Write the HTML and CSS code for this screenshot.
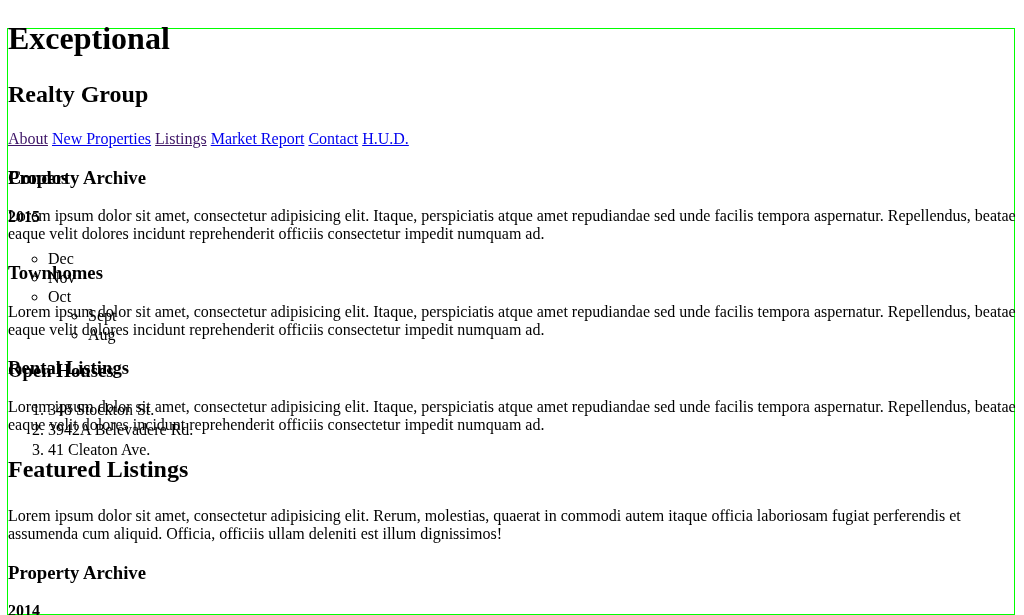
FILE: index.html
```html
<!DOCTYPE html>
<html lang="en">
<head>
<meta charset="utf-8">
<title>Exceptional Realty Group</title>
<link rel="stylesheet" href="styles.css">
</head>
<body>
<header class="site-header">
  <h1 class="brand">Exceptional</h1>
  <h2 class="tagline">Realty Group</h2>
  <nav class="nav">
    <a class="visited" href="#">About</a>
    <a href="#">New Properties</a>
    <a class="visited" href="#">Listings</a>
    <a href="#">Market Report</a>
    <a href="#">Contact</a>
    <a href="#">H.U.D.</a>
  </nav>
</header>
<div class="layout">
  <main class="content">
    <section class="block">
      <h3>Condos</h3>
      <p>Lorem ipsum dolor sit amet, consectetur adipisicing elit. Itaque, perspiciatis atque amet repudiandae sed unde facilis tempora aspernatur. Repellendus, beatae eaque velit dolores incidunt reprehenderit officiis consectetur impedit numquam ad.</p>
    </section>
    <section class="block">
      <h3>Townhomes</h3>
      <p>Lorem ipsum dolor sit amet, consectetur adipisicing elit. Itaque, perspiciatis atque amet repudiandae sed unde facilis tempora aspernatur. Repellendus, beatae eaque velit dolores incidunt reprehenderit officiis consectetur impedit numquam ad.</p>
    </section>
    <section class="block">
      <h3>Rental Listings</h3>
      <p>Lorem ipsum dolor sit amet, consectetur adipisicing elit. Itaque, perspiciatis atque amet repudiandae sed unde facilis tempora aspernatur. Repellendus, beatae eaque velit dolores incidunt reprehenderit officiis consectetur impedit numquam ad.</p>
    </section>
    <section class="block featured">
      <h2>Featured Listings</h2>
      <p>Lorem ipsum dolor sit amet, consectetur adipisicing elit. Rerum, molestias, quaerat in commodi autem itaque officia laboriosam fugiat perferendis et assumenda cum aliquid. Officia, officiis ullam deleniti est illum dignissimos!</p>
    </section>
    <aside class="archive">
      <h3>Property Archive</h3>
      <h4>2014</h4>
      <ul class="months">
        <li>Dec</li>
        <li>Nov</li>
        <li>Oct</li>
      </ul>
    </aside>
  </main>
  <aside class="sidebar">
    <h3>Property Archive</h3>
    <ul class="years">
      <li>
        <h4 class="year">2015</h4>
        <ul class="months">
          <li>Dec</li>
          <li>Nov</li>
          <li>Oct
            <ul class="months">
              <li>Sept</li>
              <li>Aug</li>
            </ul>
          </li>
        </ul>
      </li>
    </ul>
    <h3 class="open">Open Houses</h3>
    <ol class="houses">
      <li>348 Stockton St.</li>
      <li>3942A Belevadere Rd.</li>
      <li>41 Cleaton Ave.</li>
    </ol>
  </aside>
</div>
</body>
</html>
```
FILE: styles.css
```css
html {
  background: #fff;
}

body {
  margin: 8px;
  font-family: "Liberation Serif", "Times New Roman", serif;
  font-size: 16px;
  color: #000;
}

body::before {
  content: "";
  position: fixed;
  top: 28px;
  left: 7px;
  width: 1008px;
  height: 587px;
  box-sizing: border-box;
  border: 1px solid #00ff00;
  z-index: -1;
  pointer-events: none;
}

.brand {
  font-size: 32px;
  margin: 12px 0 24.4px;
}

.tagline {
  font-size: 24px;
  margin: 19.92px 0 21.5px;
}

.nav a {
  color: #0000ee;
  text-decoration: underline;
}

.nav a.visited {
  color: #3d1466;
}

.layout {
  display: grid;
  grid-template-columns: minmax(0, 1fr);
}

.content,
.sidebar {
  grid-area: 1 / 1;
  min-width: 0;
}

.block h3,
.archive h3,
.sidebar h3 {
  font-size: 18.72px;
  margin: 18.72px 0;
}

.sidebar h3.open {
  margin-top: 16px;
}

.block h2 {
  font-size: 24px;
  margin: 21.9px 0 23.9px;
}

.block p {
  margin: 16px 0;
}

.featured p {
  margin-bottom: 14px;
}

.archive h4 {
  font-size: 16px;
  margin: 0 0 21.28px;
}

.year {
  font-size: 16px;
  margin: 19px 0 23px;
}

.years {
  list-style: none;
  padding: 0;
  margin: 0;
}

.months {
  list-style-type: circle;
  padding-left: 40px;
  margin: 0;
  line-height: 19px;
}

.houses {
  padding-left: 40px;
  margin: 17px 0 16px;
  line-height: 20px;
}
```
